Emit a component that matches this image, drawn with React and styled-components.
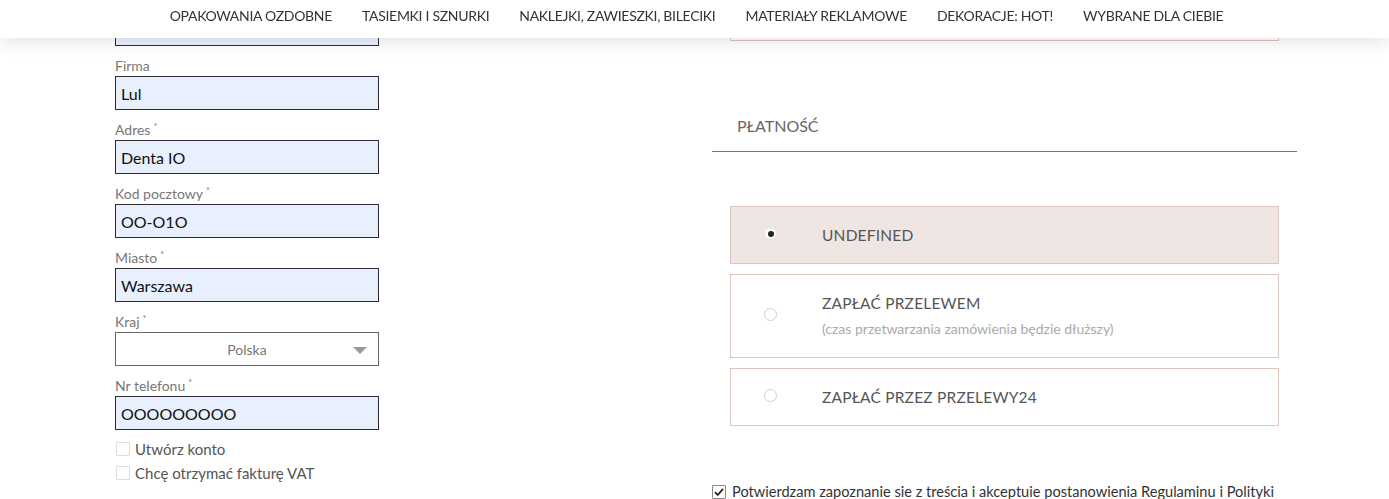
import React from 'react';
import styled, { createGlobalStyle } from 'styled-components';

const GlobalStyle = createGlobalStyle`
  html, body {
    margin: 0;
    padding: 0;
    background: #fff;
    font-family: Lato, "Noto Sans", sans-serif;
    overflow: hidden;
  }
`;

const Header = styled.header`
  position: fixed;
  top: 0;
  left: 0;
  right: 0;
  height: 38px;
  background: #fff;
  box-shadow: 0 6px 16px rgba(0, 0, 0, 0.09);
  z-index: 10;
  display: flex;
  justify-content: center;
  align-items: center;
`;

const Nav = styled.nav`
  display: flex;
  gap: 30px;
  padding-bottom: 7px;
  padding-left: 4px;
`;

const NavItem = styled.a`
  font-family: Lato, sans-serif;
  font-size: 14px;
  color: #333;
  text-decoration: none;
  letter-spacing: -0.3px;
`;

const Page = styled.main`
  display: flex;
  justify-content: space-between;
  align-items: flex-start;
  width: 1182px;
  margin-left: 115px;
`;

const LeftCol = styled.div`
  width: 264px;
  padding-top: 12px;
`;

const Field = styled.div`
  margin-bottom: 9px;
`;

const Label = styled.label`
  display: block;
  box-sizing: border-box;
  height: 21px;
  padding-top: 2px;
  line-height: 17px;
  font-size: 14px;
  color: #777;

  sup {
    font-size: 9px;
    line-height: 0;
    margin-left: 3px;
    vertical-align: 5px;
  }
`;

const Input = styled.div`
  box-sizing: border-box;
  height: 34px;
  border: 1px solid #2b2b33;
  background: #e8f0fe;
  padding: 0 5px;
  display: flex;
  align-items: center;
  font-size: 16px;
  color: #111;
`;

const Select = styled.div`
  box-sizing: border-box;
  height: 34px;
  border: 1px solid #666;
  background: #fff;
  position: relative;
  display: flex;
  align-items: center;
  justify-content: center;
  font-size: 14px;
  color: #777;
`;

const Caret = styled.span`
  position: absolute;
  right: 11px;
  top: 14px;
  width: 0;
  height: 0;
  border-left: 7px solid transparent;
  border-right: 7px solid transparent;
  border-top: 7px solid #999;
`;

const CheckRow = styled.div`
  display: flex;
  align-items: center;
  gap: 5px;
  height: 24px;
  font-size: 15px;
  color: #555;
  margin-left: 1px;
  margin-top: ${p => (p.$first ? '-2px' : '0')};
`;

const Box = styled.span`
  box-sizing: border-box;
  width: 14px;
  height: 14px;
  border: 1px solid ${p => (p.$checked ? '#888' : '#ddd')};
  border-radius: 1px;
  display: inline-flex;
  align-items: center;
  justify-content: center;
  background: #fff;
  flex-shrink: 0;
`;

const RightCol = styled.div`
  width: 585px;
`;

const TopBox = styled.div`
  height: 41px;
  margin: 0 18px;
  box-sizing: border-box;
  border: 1px solid #d9c3b9;
`;

const Heading = styled.h2`
  margin: 0;
  margin-top: 66px;
  padding: 9px 0 15px 25px;
  border-bottom: 1px solid #777;
  font-family: Lato, sans-serif;
  font-weight: 400;
  font-size: 16px;
  line-height: 20px;
  color: #666;
`;

const Options = styled.div`
  display: flex;
  flex-direction: column;
  gap: 10px;
  margin: 54px 18px 0;
`;

const Option = styled.div`
  box-sizing: border-box;
  min-height: ${p => (p.$tall ? '84px' : '58px')};
  border: 1px solid #dcc6bd;
  background: ${p => (p.$active ? '#efe6e3' : '#fff')};
  display: flex;
  align-items: center;
  padding-left: 33px;
`;

const Radio = styled.span`
  box-sizing: border-box;
  width: 13px;
  height: 13px;
  border-radius: 50%;
  border: 1px solid ${p => (p.$active ? '#e3e3e3' : '#d0d0d0')};
  background: #fff;
  display: flex;
  align-items: center;
  justify-content: center;
  margin-top: -3px;

  &::after {
    content: '';
    display: ${p => (p.$active ? 'block' : 'none')};
    width: 6px;
    height: 6px;
    border-radius: 50%;
    background: #222;
  }
`;

const OptionText = styled.div`
  margin-left: 45px;
  margin-top: -1px;
  display: flex;
  flex-direction: column;
  gap: 8px;
`;

const OptionTitle = styled.span`
  font-size: 15.5px;
  color: #555;
  letter-spacing: 0.2px;
`;

const OptionSub = styled.span`
  font-size: 14px;
  color: #aaa;
`;

const Terms = styled.div`
  display: flex;
  align-items: center;
  gap: 6px;
  margin-top: 57px;
  font-size: 14.6px;
  color: #333;
  white-space: nowrap;
`;

const fields = [
  { label: 'Firma', value: 'Lul' },
  { label: 'Adres', value: 'Denta IO', req: true },
  { label: 'Kod pocztowy', value: 'OO-O1O', req: true },
  { label: 'Miasto', value: 'Warszawa', req: true },
];

const navItems = [
  'OPAKOWANIA OZDOBNE',
  'TASIEMKI I SZNURKI',
  'NAKLEJKI, ZAWIESZKI, BILECIKI',
  'MATERIAŁY REKLAMOWE',
  'DEKORACJE: HOT!',
  'WYBRANE DLA CIEBIE',
];

const Check = () => (
  <svg width="10" height="10" viewBox="0 0 10 10">
    <path d="M1 5.2 L3.8 8 L9 1.8" fill="none" stroke="#222" strokeWidth="1.8" />
  </svg>
);

export default function App() {
  return (
    <>
      <GlobalStyle />
      <Header>
        <Nav>
          {navItems.map(n => (
            <NavItem key={n} href="#">{n}</NavItem>
          ))}
        </Nav>
      </Header>
      <Page>
        <LeftCol>
          <Field>
            <Input />
          </Field>
          {fields.map(f => (
            <Field key={f.label}>
              <Label>
                {f.label}
                {f.req && <sup>*</sup>}
              </Label>
              <Input>{f.value}</Input>
            </Field>
          ))}
          <Field>
            <Label>
              Kraj<sup>*</sup>
            </Label>
            <Select>
              Polska
              <Caret />
            </Select>
          </Field>
          <Field>
            <Label>
              Nr telefonu<sup>*</sup>
            </Label>
            <Input>OOOOOOOOO</Input>
          </Field>
          <CheckRow $first>
            <Box />
            Utwórz konto
          </CheckRow>
          <CheckRow>
            <Box />
            Chcę otrzymać fakturę VAT
          </CheckRow>
        </LeftCol>
        <RightCol>
          <TopBox />
          <Heading>PŁATNOŚĆ</Heading>
          <Options>
            <Option $active>
              <Radio $active />
              <OptionText>
                <OptionTitle>UNDEFINED</OptionTitle>
              </OptionText>
            </Option>
            <Option $tall>
              <Radio />
              <OptionText>
                <OptionTitle>ZAPŁAĆ PRZELEWEM</OptionTitle>
                <OptionSub>(czas przetwarzania zamówienia będzie dłuższy)</OptionSub>
              </OptionText>
            </Option>
            <Option>
              <Radio />
              <OptionText>
                <OptionTitle>ZAPŁAĆ PRZEZ PRZELEWY24</OptionTitle>
              </OptionText>
            </Option>
          </Options>
          <Terms>
            <Box $checked>
              <Check />
            </Box>
            Potwierdzam zapoznanie sie z treścia i akceptuie postanowienia Regulaminu i Polityki
          </Terms>
        </RightCol>
      </Page>
    </>
  );
}
